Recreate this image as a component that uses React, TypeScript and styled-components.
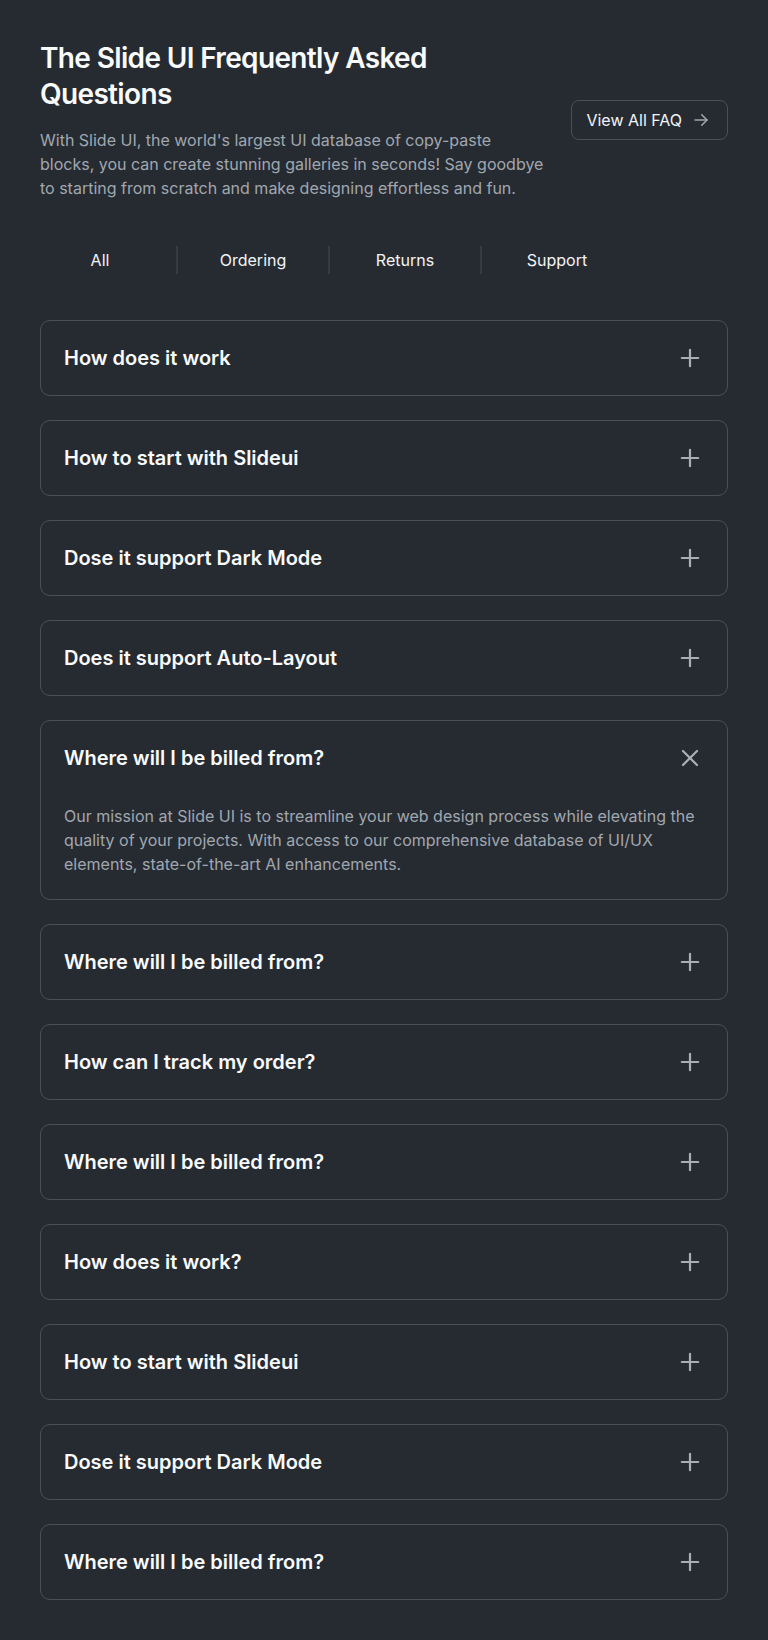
import React, { useState } from "react";
import styled, { createGlobalStyle } from "styled-components";

const GlobalStyle = createGlobalStyle`
  * { box-sizing: border-box; }
  html, body {
    margin: 0;
    padding: 0;
    background: #262b32;
    font-family: Inter, "Noto Sans", sans-serif;
    -webkit-font-smoothing: antialiased;
  }
`;

const tabs = ["All", "Ordering", "Returns", "Support"];

const faqs = [
  "How does it work",
  "How to start with Slideui",
  "Dose it support Dark Mode",
  "Does it support Auto-Layout",
  "Where will I be billed from?",
  "Where will I be billed from?",
  "How can I track my order?",
  "Where will I be billed from?",
  "How does it work?",
  "How to start with Slideui",
  "Dose it support Dark Mode",
  "Where will I be billed from?",
];

const answer =
  "Our mission at Slide UI is to streamline your web design process while elevating the quality of your projects. With access to our comprehensive database of UI/UX elements, state-of-the-art AI enhancements.";

const PlusIcon = () => (
  <svg width="28" height="28" viewBox="0 0 24 24" fill="none" stroke="currentColor" strokeWidth="1.9" strokeLinecap="round">
    <path d="M5 12h14" />
    <path d="M12 5v14" />
  </svg>
);

const CloseIcon = () => (
  <svg width="28" height="28" viewBox="0 0 24 24" fill="none" stroke="currentColor" strokeWidth="1.9" strokeLinecap="round">
    <path d="M18 6 6 18" />
    <path d="m6 6 12 12" />
  </svg>
);

const ArrowIcon = () => (
  <svg width="18" height="18" viewBox="0 0 24 24" fill="none" stroke="currentColor" strokeWidth="2" strokeLinecap="round" strokeLinejoin="round">
    <path d="M4 12h16" />
    <path d="m13 5 7 7-7 7" />
  </svg>
);

const App: React.FC = () => {
  const [open, setOpen] = useState<number>(4);
  const [activeTab, setActiveTab] = useState(0);

  return (
    <Page>
      <GlobalStyle />
      <Header>
        <Intro>
          <Title>The Slide UI Frequently Asked Questions</Title>
          <Lead>
            With Slide UI, the world's largest UI database of copy-paste blocks, you can create stunning
            galleries in seconds! Say goodbye to starting from scratch and make designing effortless and fun.
          </Lead>
        </Intro>
        <ViewAllButton>
          View All FAQ
          <ArrowWrap>
            <ArrowIcon />
          </ArrowWrap>
        </ViewAllButton>
      </Header>

      <TabBar>
        {tabs.map((t, i) => (
          <Tab key={t} $first={i === 0} $active={activeTab === i} onClick={() => setActiveTab(i)}>
            {t}
          </Tab>
        ))}
      </TabBar>

      <List>
        {faqs.map((q, i) => (
          <Card key={i}>
            <CardHead onClick={() => setOpen(open === i ? -1 : i)}>
              <Question>{q}</Question>
              <IconWrap>{open === i ? <CloseIcon /> : <PlusIcon />}</IconWrap>
            </CardHead>
            {open === i && <Answer>{answer}</Answer>}
          </Card>
        ))}
      </List>
    </Page>
  );
};

export default App;

const Page = styled.div`
  width: 768px;
  min-height: 1640px;
  padding: 40px 40px 40px;
  background: #262b32;
`;

const Header = styled.div`
  display: flex;
  align-items: center;
  justify-content: space-between;
  gap: 24px;
`;

const Intro = styled.div`
  flex: 0 1 505px;
  min-width: 0;
`;

const Title = styled.h1`
  margin: 0;
  font-size: 28px;
  line-height: 36px;
  font-weight: 600;
  color: #f9fafb;
  letter-spacing: -0.65px;
  max-width: 480px;
`;

const Lead = styled.p`
  margin: 16px 0 0;
  font-size: 16px;
  line-height: 24px;
  color: #a1a7af;
`;

const ViewAllButton = styled.button`
  flex: none;
  display: flex;
  align-items: center;
  gap: 10px;
  height: 40px;
  padding: 0 17px 0 14px;
  background: transparent;
  border: 1px solid #4a5059;
  border-radius: 8px;
  color: #f3f4f6;
  font-family: inherit;
  font-size: 16px;
  line-height: 24px;
  cursor: pointer;
`;

const ArrowWrap = styled.span`
  display: flex;
  color: #a1a7af;
`;

const TabBar = styled.div`
  display: flex;
  margin: 46px 0 0 -16px;
`;

const Tab = styled.div<{ $first: boolean; $active: boolean }>`
  width: 152px;
  height: 28px;
  display: flex;
  align-items: center;
  justify-content: center;
  font-size: 16px;
  color: #f3f4f6;
  border-left: ${(p) => (p.$first ? "none" : "2px solid #353b43")};
  cursor: pointer;
`;

const List = styled.div`
  display: flex;
  flex-direction: column;
  gap: 24px;
  margin-top: 46px;
`;

const Card = styled.div`
  border: 1px solid #4a5059;
  border-radius: 10px;
  padding: 23px 23px 23px;
  background: #262b32;
`;

const CardHead = styled.div`
  display: flex;
  align-items: center;
  justify-content: space-between;
  height: 28px;
  cursor: pointer;
`;

const Question = styled.h3`
  margin: 0;
  font-size: 20px;
  line-height: 28px;
  font-weight: 600;
  color: #f9fafb;
`;

const IconWrap = styled.span`
  display: flex;
  color: #a9afb7;
`;

const Answer = styled.p`
  margin: 32px 0 0;
  font-size: 16px;
  line-height: 24px;
  color: #a1a7af;
`;
